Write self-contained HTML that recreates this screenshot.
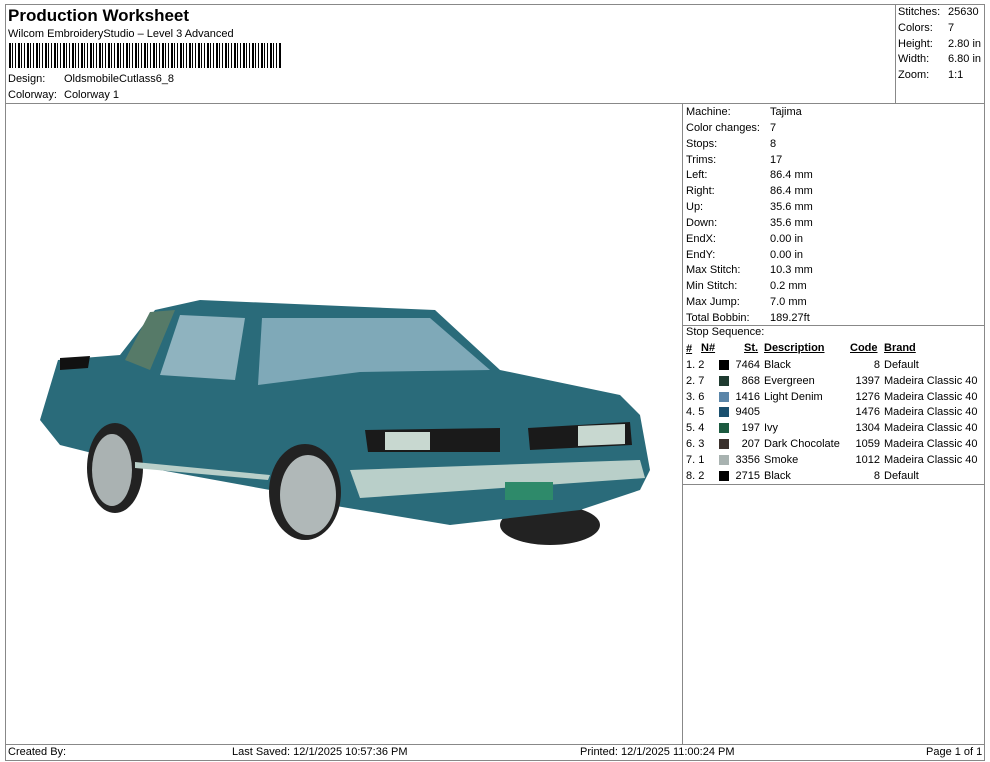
<!DOCTYPE html>
<html><head><style>
body{margin:0;background:#fff;font-family:"Liberation Sans",sans-serif;font-size:11px;color:#000;}
.a{position:absolute;white-space:nowrap;}
.ln{position:absolute;background:#888;}
u{text-decoration:underline;}
</style></head><body>
<div style="position:relative;width:990px;height:762px;overflow:hidden">
<div class="ln" style="left:5px;top:4px;width:980px;height:1px"></div>
<div class="ln" style="left:5px;top:760px;width:980px;height:1px"></div>
<div class="ln" style="left:5px;top:4px;width:1px;height:757px"></div>
<div class="ln" style="left:984px;top:4px;width:1px;height:757px"></div>
<div class="ln" style="left:5px;top:103px;width:980px;height:1px"></div>
<div class="ln" style="left:895px;top:4px;width:1px;height:100px"></div>
<div class="ln" style="left:682px;top:103px;width:1px;height:641px"></div>
<div class="ln" style="left:682px;top:325px;width:303px;height:1px"></div>
<div class="ln" style="left:682px;top:484px;width:303px;height:1px"></div>
<div class="ln" style="left:5px;top:744px;width:980px;height:1px"></div>

<div class="a" style="left:8px;top:6px;font-size:17px;font-weight:bold">Production Worksheet</div>
<div class="a" style="left:8px;top:28px">Wilcom EmbroideryStudio – Level 3 Advanced</div>
<div class="a" style="left:9px;top:43px;width:273px;height:25px;background:repeating-linear-gradient(90deg,#000 0 2px,#fff 2px 3px,#000 3px 4px,#fff 4px 6px,#000 6px 7px,#fff 7px 9px)"></div>
<div class="a" style="left:8px;top:73px">Design:</div><div class="a" style="left:64px;top:73px">OldsmobileCutlass6_8</div>
<div class="a" style="left:8px;top:89px">Colorway:</div><div class="a" style="left:64px;top:89px">Colorway 1</div>

<div class="a" style="left:898px;top:5px;line-height:15.8px">Stitches:<br>Colors:<br>Height:<br>Width:<br>Zoom:</div>
<div class="a" style="left:948px;top:5px;line-height:15.8px">25630<br>7<br>2.80 in<br>6.80 in<br>1:1</div>

<div class="a" style="left:686px;top:105px;line-height:15.85px">Machine:<br>Color changes:<br>Stops:<br>Trims:<br>Left:<br>Right:<br>Up:<br>Down:<br>EndX:<br>EndY:<br>Max Stitch:<br>Min Stitch:<br>Max Jump:<br>Total Bobbin:</div>
<div class="a" style="left:770px;top:105px;line-height:15.85px">Tajima<br>7<br>8<br>17<br>86.4 mm<br>86.4 mm<br>35.6 mm<br>35.6 mm<br>0.00 in<br>0.00 in<br>10.3 mm<br>0.2 mm<br>7.0 mm<br>189.27ft</div>
<div class="a" style="left:686px;top:326px">Stop Sequence:</div>
<div class="a" style="left:686px;top:342px;line-height:15.8px;font-weight:bold"><u>#</u></div>
<div class="a" style="left:701px;top:342px;font-weight:bold"><u>N#</u></div>
<div class="a" style="left:744px;top:342px;font-weight:bold"><u>St.</u></div>
<div class="a" style="left:764px;top:342px;font-weight:bold"><u>Description</u></div>
<div class="a" style="left:850px;top:342px;font-weight:bold"><u>Code</u></div>
<div class="a" style="left:884px;top:342px;font-weight:bold"><u>Brand</u></div>
<div class="a" style="left:686px;top:358px;line-height:15.8px">1. 2<br>2. 7<br>3. 6<br>4. 5<br>5. 4<br>6. 3<br>7. 1<br>8. 2</div>
<div class="a" style="left:719px;top:360px;width:10px;line-height:0">
<div style="height:10px;background:#000;margin-bottom:5.8px"></div>
<div style="height:10px;background:#1f3b30;margin-bottom:5.8px"></div>
<div style="height:10px;background:#5a85a8;margin-bottom:5.8px"></div>
<div style="height:10px;background:#1a4f6e;margin-bottom:5.8px"></div>
<div style="height:10px;background:#1c5a40;margin-bottom:5.8px"></div>
<div style="height:10px;background:#3a302c;margin-bottom:5.8px"></div>
<div style="height:10px;background:#a8b2b0;margin-bottom:5.8px"></div>
<div style="height:10px;background:#000"></div></div>
<div class="a" style="left:728px;top:358px;width:32px;text-align:right;line-height:15.8px">7464<br>868<br>1416<br>9405<br>197<br>207<br>3356<br>2715</div>
<div class="a" style="left:764px;top:358px;line-height:15.8px">Black<br>Evergreen<br>Light Denim<br>&nbsp;<br>Ivy<br>Dark Chocolate<br>Smoke<br>Black</div>
<div class="a" style="left:844px;top:358px;width:36px;text-align:right;line-height:15.8px">8<br>1397<br>1276<br>1476<br>1304<br>1059<br>1012<br>8</div>
<div class="a" style="left:884px;top:358px;line-height:15.8px">Default<br>Madeira Classic 40<br>Madeira Classic 40<br>Madeira Classic 40<br>Madeira Classic 40<br>Madeira Classic 40<br>Madeira Classic 40<br>Default</div>

<div class="a" style="left:8px;top:746px">Created By:</div>
<div class="a" style="left:232px;top:746px">Last Saved: 12/1/2025 10:57:36 PM</div>
<div class="a" style="left:580px;top:746px">Printed: 12/1/2025 11:00:24 PM</div>
<div class="a" style="left:926px;top:746px">Page 1 of 1</div>

<svg class="a" style="left:0;top:0" width="680" height="740">
<ellipse cx="550" cy="525" rx="50" ry="20" fill="#222"/>
<path d="M58 360 L120 355 L155 310 L200 300 L435 310 L500 370 L620 395 L640 415 L650 470 L640 490 L580 510 L450 525 L330 505 L270 490 L160 470 L60 445 L40 420 Z" fill="#2a6b7a"/>
<path d="M125 360 L150 312 L175 310 L150 370 Z" fill="#567a68"/>
<path d="M160 375 L180 315 L245 318 L235 380 Z" fill="#8fb3bf"/>
<path d="M258 385 L262 318 L430 318 L490 370 L360 372 Z" fill="#7fa9b8"/>
<path d="M60 358 L90 356 L88 368 L60 370 Z" fill="#111"/>
<ellipse cx="115" cy="468" rx="28" ry="45" fill="#222"/>
<ellipse cx="112" cy="470" rx="20" ry="36" fill="#aab2b2"/>
<ellipse cx="305" cy="492" rx="36" ry="48" fill="#222"/>
<ellipse cx="308" cy="495" rx="28" ry="40" fill="#b0b8b8"/>
<path d="M350 470 L640 460 L645 478 L360 498 Z" fill="#b9cfc9"/>
<path d="M365 430 L500 428 L500 452 L368 452 Z" fill="#1a1a1a"/>
<path d="M385 432 L430 432 L430 450 L385 450 Z" fill="#c8d8d0"/>
<path d="M528 428 L630 422 L632 445 L530 450 Z" fill="#1a1a1a"/>
<path d="M578 426 L625 424 L625 444 L578 446 Z" fill="#c8d8d0"/>
<rect x="505" y="482" width="48" height="18" fill="#2e8a6a"/>
<path d="M135 462 L270 475 L268 480 L135 468 Z" fill="#b9cfc9"/>
</svg>
</div>
</body></html>
